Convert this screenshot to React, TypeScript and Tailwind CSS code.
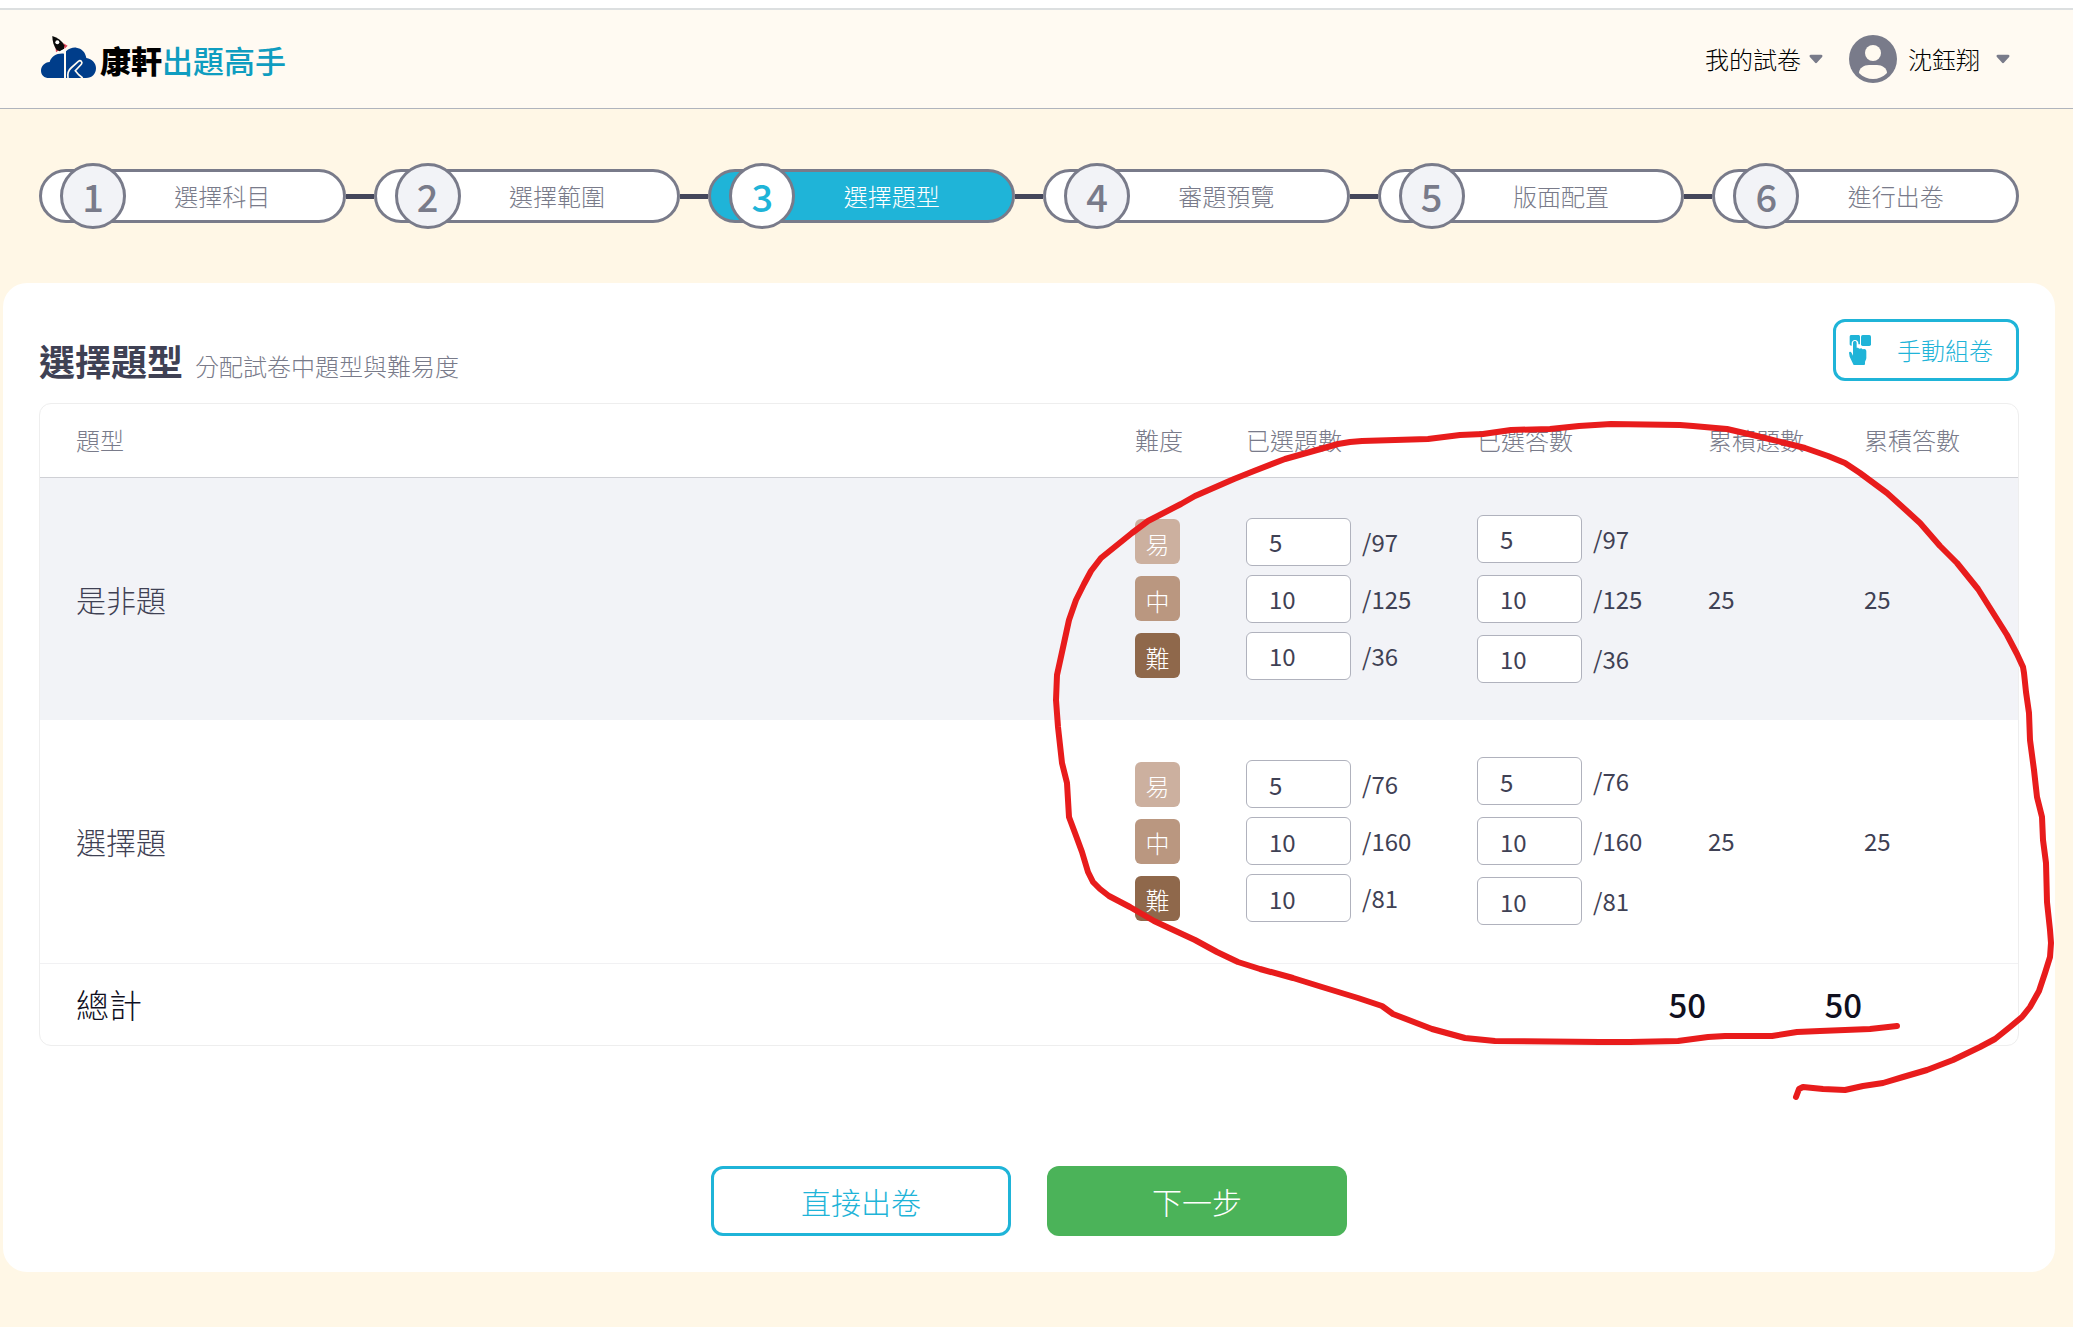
import { useState } from 'react';

type Level = 'easy' | 'medium' | 'hard';

interface LevelRow {
  level: Level;
  label: string;
  total: number;
}

interface QuestionType {
  id: string;
  name: string;
  levels: LevelRow[];
}

type Counts = Record<string, string>;

const STEPS = ['選擇科目', '選擇範圍', '選擇題型', '審題預覽', '版面配置', '進行出卷'];
const CURRENT_STEP = 2;

const QUESTION_TYPES: QuestionType[] = [
  {
    id: 'tf',
    name: '是非題',
    levels: [
      { level: 'easy', label: '易', total: 97 },
      { level: 'medium', label: '中', total: 125 },
      { level: 'hard', label: '難', total: 36 },
    ],
  },
  {
    id: 'choice',
    name: '選擇題',
    levels: [
      { level: 'easy', label: '易', total: 76 },
      { level: 'medium', label: '中', total: 160 },
      { level: 'hard', label: '難', total: 81 },
    ],
  },
];

const LEVEL_COLORS: Record<Level, string> = {
  easy: 'bg-[#ccb09f]',
  medium: 'bg-[#ba9780]',
  hard: 'bg-[#8f684b]',
};

const INITIAL_COUNTS: Counts = {
  'tf-easy': '5',
  'tf-medium': '10',
  'tf-hard': '10',
  'choice-easy': '5',
  'choice-medium': '10',
  'choice-hard': '10',
};

// Pen stroke drawn over the table
const PEN_POINTS =
  '1897,1026 1870,1029 1820,1031 1797,1032 1772,1036 1725,1036 1708,1037 1678,1041 1630,1042 1600,1042 1495,1041 1465,1038 1432,1029 1393,1014 1382,1006 1358,998 1322,987 1293,978 1260,969 1238,962 1217,952 1195,940 1154,921 1130,907 1109,896 1100,889 1093,882 1088,872 1082,852 1075,833 1069,817 1067,783 1062,763 1058,727 1056,700 1057,675 1064,643 1069,620 1076,600 1084,584 1091,571 1101,558 1132,533 1148,521 1181,504 1195,496 1234,479 1254,471 1285,459 1317,450 1338,444 1350,442 1362,441 1428,439 1460,435 1483,434 1511,430 1550,429 1579,426 1611,424 1680,425 1693,426 1727,429 1757,436 1785,443 1805,448 1828,456 1845,463 1860,473 1887,493 1908,512 1920,523 1940,546 1957,563 1978,589 1990,608 2007,635 2017,654 2023,667 2024,673 2026,692 2029,713 2030,740 2034,770 2037,797 2042,817 2043,840 2046,863 2047,902 2050,930 2051,943 2050,957 2045,973 2039,991 2030,1007 2022,1017 2010,1027 1995,1039 1980,1047 1953,1060 1927,1070 1903,1077 1883,1083 1863,1086 1845,1090 1823,1089 1803,1087 1799,1089 1796,1097';

function sumCounts(counts: Counts, prefix: string) {
  return Object.entries(counts)
    .filter(([key]) => key.startsWith(prefix))
    .reduce((sum, [, value]) => sum + (parseInt(value, 10) || 0), 0);
}

function Caret() {
  return (
    <svg viewBox="0 0 14 10" className="h-[10px] w-[14px]" fill="#797b8a" aria-hidden="true">
      <path d="M1.8 0.8h10.4c1.2 0 1.7 1.3 0.9 2.2l-5 5.6c-0.6 0.7-1.6 0.7-2.2 0l-5-5.6c-0.8-0.9-0.3-2.2 0.9-2.2z" />
    </svg>
  );
}

function LogoMark() {
  return (
    <svg viewBox="33 24 165 138" className="mb-1 h-[46px] w-[55px]" aria-hidden="true">
      <path
        d="M102 156H57c-14 0-24-9-24-22 0-14 11-25 26-26 5-17 21-27 43-25z"
        fill="#003d8a"
      />
      <path
        d="M108 76c9-9 20-12 31-11 16 2 27 13 30 31 17 3 29 15 29 30 0 18-12 30-30 30h-60z"
        fill="#003d8a"
      />
      <path
        d="M114 156c-2-14 1-23 9-30l22-20c7-5 14 2 9 9l-18 19 10 12 12 10"
        fill="none"
        stroke="#fffaf0"
        strokeWidth="5"
      />
      <path d="M76 60l2 19 10-7zM99 51l14 8-9 9z" fill="#e0485e" />
      <path d="M67 30c16 5 29 14 36 28l-1 11-13 7-9-4c-9-12-13-26-13-42z" fill="#0a0a0a" />
      <circle cx="82" cy="49" r="6" fill="#fff" />
      <path d="M92 75l10-6-1 6-7 3z" fill="#fff" />
    </svg>
  );
}

function Avatar() {
  return (
    <svg viewBox="0 0 48 48" className="size-12" aria-hidden="true">
      <circle cx="24" cy="24" r="24" fill="#797b8a" />
      <circle cx="24" cy="18" r="8" fill="#fffaf0" />
      <path d="M10 38c0-5 5-8 10-8h8c5 0 10 3 10 8-4 4-9 6-14 6s-10-2-14-6z" fill="#fffaf0" />
    </svg>
  );
}

function TapIcon() {
  return (
    <svg viewBox="0 0 66 90" className="h-[30px] w-[22px]" fill="#1fb4d8" aria-hidden="true">
      <rect x="36" y="0" width="30" height="33" rx="5" />
      <path d="M7 0h21c3 0 5 2 5 5v23h-5v-3c0-6-4-10-10-10S8 19 8 25v7H7c-3 0-5-2-5-5V5c0-3 2-5 5-5z" />
      <path d="M12 24c0-8 11-8 11 0v14l4 0 4 3 6-1 4 3 5-1c4 1 6 3 6 7v20c0 5-4 8-4 13v5c0 2-1 3-3 3H17c-3 0-4-1-5-4L2 65 0 53c1-4 6-3 8 1l4 8z" />
    </svg>
  );
}

function StepBar() {
  return (
    <ol className="flex items-center px-9 py-[60px]">
      {STEPS.map((name, i) => {
        const active = i === CURRENT_STEP;
        return (
          <li key={name} className={i === 0 ? 'flex flex-[307] items-center' : 'flex flex-[335] items-center'}>
            {i > 0 && <span className="h-[5px] w-7 shrink-0 bg-[#44465a]" />}
            <div
              aria-current={active ? 'step' : undefined}
              className={`flex h-[54px] flex-1 items-center rounded-full border-3 border-[#797b8a] pl-[18px] ${
                active ? 'bg-[#1fb4d8] text-white' : 'bg-white text-[#797b8a]'
              }`}
            >
              <span
                className={`-my-2 flex size-[66px] shrink-0 items-center justify-center rounded-full border-3 border-[#797b8a] text-[38px] leading-none font-medium ${
                  active ? 'bg-white text-[#1fb4d8]' : 'bg-[#f2f3f7]'
                }`}
              >
                {i + 1}
              </span>
              <span className="flex-1 pr-6 text-center text-2xl">{name}</span>
            </div>
          </li>
        );
      })}
    </ol>
  );
}

interface CountInputsProps {
  type: QuestionType;
  field: string;
  counts: Counts;
  onChange: (key: string, value: string) => void;
  className: string;
}

function CountInputs({ type, field, counts, onChange, className }: CountInputsProps) {
  return (
    <div className={`flex flex-col ${className}`}>
      {type.levels.map((row) => {
        const key = `${type.id}-${row.level}`;
        return (
          <div key={key} className="flex items-center gap-[11px]">
            <input
              type="text"
              inputMode="numeric"
              aria-label={`${type.name} ${row.label} ${field}`}
              value={counts[key]}
              onChange={(e) => onChange(key, e.target.value)}
              className="h-12 w-[105px] rounded-md border border-[#b0b2bd] bg-white pl-[22px] text-2xl"
            />
            <span>/{row.total}</span>
          </div>
        );
      })}
    </div>
  );
}

export default function App() {
  const [questionCounts, setQuestionCounts] = useState<Counts>(INITIAL_COUNTS);
  const [answerCounts, setAnswerCounts] = useState<Counts>(INITIAL_COUNTS);

  return (
    <div className="relative min-h-screen bg-[#fff7e6] font-['Noto_Sans_CJK_TC',sans-serif] font-light text-[#3f4154]">
      <div className="h-[10px] border-b-2 border-[#dcdfe0] bg-white" />
      <header className="flex h-[99px] items-center justify-between border-b border-[#b0b4bd] bg-[#fffaf2] pr-[63px] pl-[41px]">
        <a href="#" className="flex items-center text-[31px] leading-none">
          <LogoMark />
          <span className="ml-1 font-black text-black">康軒</span>
          <span className="font-medium text-[#0f9dc0]">出題高手</span>
        </a>
        <nav className="flex items-center text-2xl text-black">
          <button type="button" className="flex items-center gap-2">
            我的試卷
            <Caret />
          </button>
          <button type="button" className="ml-[26px] flex items-center">
            <Avatar />
            <span className="mr-4 ml-[11px]">沈鈺翔</span>
            <Caret />
          </button>
        </nav>
      </header>

      <main className="pr-[18px] pl-[3px]">
        <StepBar />

        <section className="rounded-3xl bg-white p-9">
          <div className="flex items-start justify-between">
            <div className="flex items-baseline gap-3 pt-3.5">
              <h1 className="text-4xl leading-[54px] font-bold">選擇題型</h1>
              <p className="text-2xl text-[#797b8a]">分配試卷中題型與難易度</p>
            </div>
            <button
              type="button"
              className="flex h-[62px] w-[186px] items-center rounded-xl border-3 border-[#1fb4d8] pl-[13px] text-2xl text-[#1fb4d8]"
            >
              <TapIcon />
              <span className="ml-[26px]">手動組卷</span>
            </button>
          </div>

          <div className="mt-4 overflow-hidden rounded-xl border border-[#eeeeee]">
            <table className="w-full table-fixed border-collapse text-left text-2xl">
              <colgroup>
                <col />
                <col className="w-[111px]" />
                <col className="w-[231px]" />
                <col className="w-[231px]" />
                <col className="w-[156px]" />
                <col className="w-[154px]" />
              </colgroup>
              <thead>
                <tr className="h-[73px] border-b border-[#cfd0d5] text-[#797b8a]">
                  <th className="pl-9 font-light">題型</th>
                  <th className="font-light">難度</th>
                  <th className="font-light">已選題數</th>
                  <th className="font-light">已選答數</th>
                  <th className="font-light">累積題數</th>
                  <th className="font-light">累積答數</th>
                </tr>
              </thead>
              <tbody>
                {QUESTION_TYPES.map((type) => (
                  <tr key={type.id} className="h-[243px] font-normal odd:bg-[#f2f3f7]">
                    <th className="pl-9 text-3xl font-light">{type.name}</th>
                    <td>
                      <div className="flex flex-col gap-3 font-light">
                        {type.levels.map((row) => (
                          <span
                            key={row.level}
                            className={`flex size-[45px] items-center justify-center rounded-md pt-1 text-2xl leading-none text-white ${LEVEL_COLORS[row.level]}`}
                          >
                            {row.label}
                          </span>
                        ))}
                      </div>
                    </td>
                    <td>
                      <CountInputs
                        type={type}
                        field="已選題數"
                        counts={questionCounts}
                        onChange={(key, value) => setQuestionCounts({ ...questionCounts, [key]: value })}
                        className="gap-[9px]"
                      />
                    </td>
                    <td>
                      <CountInputs
                        type={type}
                        field="已選答數"
                        counts={answerCounts}
                        onChange={(key, value) => setAnswerCounts({ ...answerCounts, [key]: value })}
                        className="gap-3"
                      />
                    </td>
                    <td>{sumCounts(questionCounts, type.id)}</td>
                    <td>{sumCounts(answerCounts, type.id)}</td>
                  </tr>
                ))}
              </tbody>
              <tfoot>
                <tr className="h-[82px] border-t border-[#f1f1f3] text-[33px] text-[#10101f]">
                  <th colSpan={3} className="pl-9 font-light">總計</th>
                  <td className="pr-0.5 text-right font-medium">{sumCounts(questionCounts, '')}</td>
                  <td className="pr-0.5 text-right font-medium">{sumCounts(answerCounts, '')}</td>
                  <td />
                </tr>
              </tfoot>
            </table>
          </div>

          <div className="mt-[120px] flex justify-center gap-9 text-3xl">
            <button
              type="button"
              className="h-[70px] w-[300px] rounded-xl border-3 border-[#1fb4d8] text-[#1fb4d8]"
            >
              直接出卷
            </button>
            <button type="button" className="h-[70px] w-[300px] rounded-xl bg-[#4bb359] text-white">
              下一步
            </button>
          </div>
        </section>
      </main>

      <svg
        viewBox="0 0 2073 1327"
        className="pointer-events-none absolute inset-x-0 top-0 w-full"
        aria-hidden="true"
      >
        <polyline
          points={PEN_POINTS}
          fill="none"
          stroke="#e81c1c"
          strokeWidth="6"
          strokeLinecap="round"
          strokeLinejoin="round"
        />
      </svg>
    </div>
  );
}
